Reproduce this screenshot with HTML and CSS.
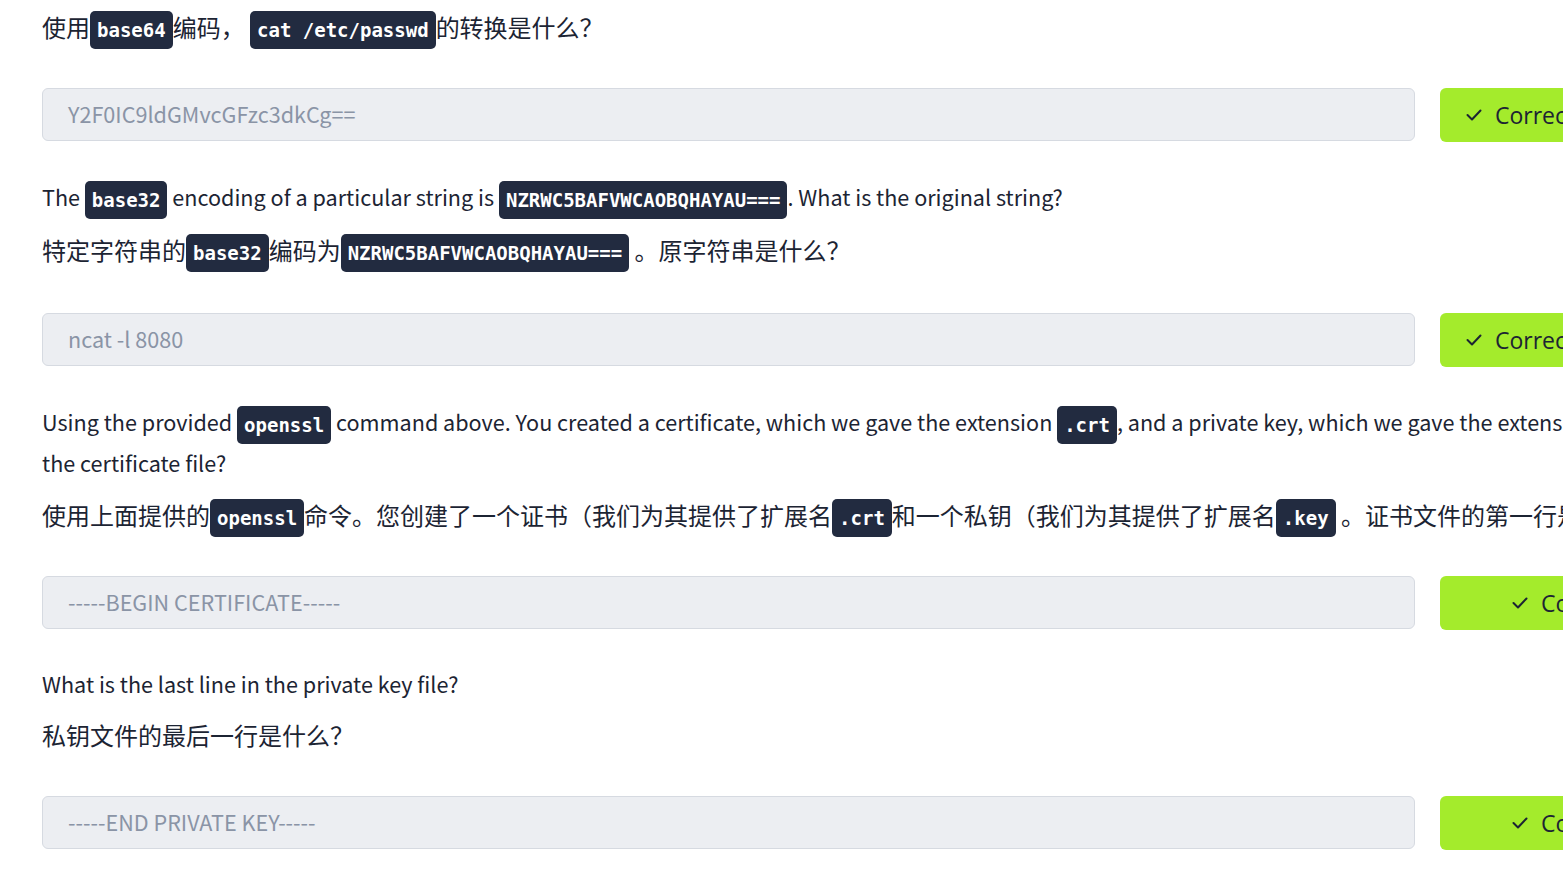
FILE: index.html
```html
<!DOCTYPE html>
<html lang="zh">
<head>
<meta charset="utf-8">
<title>Questions</title>
<link rel="stylesheet" href="styles.css">
</head>
<body>
<div class="page">
  <section class="q q1">
    <p class="zh last">使用<code>base64</code>编码， <code>cat /etc/passwd</code>的转换是什么？</p>
    <div class="answer">
      <div class="input">Y2F0IC9ldGMvcGFzc3dkCg==</div>
      <div class="btn"><svg class="check" viewBox="0 0 16 12" width="16" height="12"><polyline points="1.5,6 6,10.5 14.5,1.5" fill="none" stroke="#1c2433" stroke-width="2" stroke-linecap="round" stroke-linejoin="round"/></svg><span>Correct Answer</span></div>
    </div>
  </section>

  <section class="q">
    <p class="en">The <code>base32</code> encoding of a particular string is <code>NZRWC5BAFVWCAOBQHAYAU===</code>. What is the original string?</p>
    <p class="zh last">特定字符串的<code>base32</code>编码为<code>NZRWC5BAFVWCAOBQHAYAU===</code> 。原字符串是什么？</p>
    <div class="answer">
      <div class="input">ncat -l 8080</div>
      <div class="btn"><svg class="check" viewBox="0 0 16 12" width="16" height="12"><polyline points="1.5,6 6,10.5 14.5,1.5" fill="none" stroke="#1c2433" stroke-width="2" stroke-linecap="round" stroke-linejoin="round"/></svg><span>Correct Answer</span></div>
    </div>
  </section>

  <section class="q q3">
    <p class="en">Using the provided <code>openssl</code> command above. You created a certificate, which we gave the extension <code>.crt</code>, and a private key, which we gave the extension <code>.key</code>. What is the first line of<br>the certificate file?</p>
    <p class="zh last">使用上面提供的<code>openssl</code>命令。您创建了一个证书（我们为其提供了扩展名<code>.crt</code>和一个私钥（我们为其提供了扩展名<code>.key</code> 。证书文件的第一行是什么？</p>
    <div class="answer">
      <div class="input">-----BEGIN CERTIFICATE-----</div>
      <div class="btn wide"><svg class="check" viewBox="0 0 16 12" width="16" height="12"><polyline points="1.5,6 6,10.5 14.5,1.5" fill="none" stroke="#1c2433" stroke-width="2" stroke-linecap="round" stroke-linejoin="round"/></svg><span>Correct Answer</span></div>
    </div>
  </section>

  <section class="q q4">
    <p class="en">What is the last line in the private key file?</p>
    <p class="zh last">私钥文件的最后一行是什么？</p>
    <div class="answer">
      <div class="input">-----END PRIVATE KEY-----</div>
      <div class="btn wide"><svg class="check" viewBox="0 0 16 12" width="16" height="12"><polyline points="1.5,6 6,10.5 14.5,1.5" fill="none" stroke="#1c2433" stroke-width="2" stroke-linecap="round" stroke-linejoin="round"/></svg><span>Correct Answer</span></div>
    </div>
  </section>
</div>
</body>
</html>
```

FILE: styles.css
```css
html, body {
  margin: 0;
  padding: 0;
  background: #ffffff;
}

body {
  width: 1563px;
  height: 874px;
  overflow: hidden;
  font-family: "Noto Sans CJK SC", "Noto Sans", sans-serif;
  color: #1c2433;
}

.page {
  width: 1900px;
  padding: 6px 0 0 42px;
}

.q p {
  margin: 0 0 12px;
  line-height: 41px;
}

.q p.en {
  font-size: 21.6px;
}

.q p.zh {
  font-size: 24px;
}

.q p.last {
  margin-bottom: 43px;
}

.q1 p.last {
  margin-bottom: 41px;
}

.q3 p.en {
  margin-bottom: 11px;
}

.q3 p.last {
  margin-bottom: 41px;
}

.q4 p {
  line-height: 40px;
}

.q4 p.last {
  margin-bottom: 41px;
}

.q4 p.en {
  margin-top: 1px;
  margin-bottom: 11px;
}

.q code {
  display: inline-block;
  height: 38px;
  margin: -8px 0;
  line-height: 38px;
  padding: 0 7px;
  border-radius: 5px;
  background: #222b40;
  color: #ffffff;
  font-family: "DejaVu Sans Mono", "Liberation Mono", monospace;
  font-weight: bold;
  font-size: 19px;
  vertical-align: middle;
}

.answer {
  display: flex;
  gap: 25px;
  margin-bottom: 34px;
}

.q1 .answer {
  margin-bottom: 37px;
}

.q1 + .q p.en {
  margin-top: -3px;
}

.input {
  flex: none;
  box-sizing: border-box;
  width: 1373px;
  height: 53px;
  padding-left: 25px;
  border: 1px solid #d6dae1;
  border-radius: 6px;
  background: #eceef2;
  color: #8a94a6;
  font-size: 21.6px;
  line-height: 50px;
}

.btn {
  flex: none;
  box-sizing: border-box;
  width: 300px;
  height: 54px;
  padding-left: 26px;
  display: flex;
  align-items: center;
  gap: 13px;
  border-radius: 6px;
  background: #a4eb2c;
  color: #1c2433;
  font-family: "Open Sans", "Noto Sans", sans-serif;
  font-size: 23px;
  white-space: nowrap;
}

.btn.wide {
  padding-left: 72px;
}

.check {
  flex: none;
}
```
